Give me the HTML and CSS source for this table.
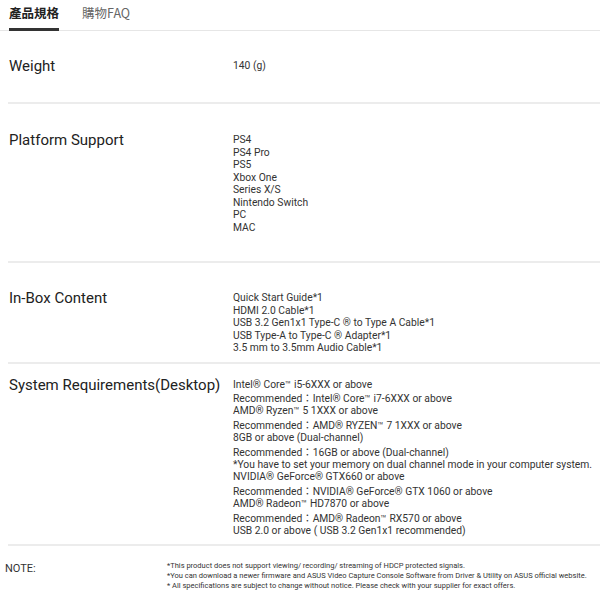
FILE: index.html
```html
<!DOCTYPE html>
<html lang="zh-Hant">
<head>
<meta charset="utf-8">
<title>產品規格</title>
<link rel="stylesheet" href="styles.css">
</head>
<body>
<div class="page">
  <nav class="tabs">
    <span class="tab tab-active">產品規格</span>
    <span class="tab">購物FAQ</span>
  </nav>

  <section class="row row-weight">
    <div class="label">Weight</div>
    <div class="values"><div>140 (g)</div></div>
  </section>

  <section class="row row-platform">
    <div class="label">Platform Support</div>
    <div class="values">
      <div>PS4</div>
      <div>PS4 Pro</div>
      <div>PS5</div>
      <div>Xbox One</div>
      <div>Series X/S</div>
      <div>Nintendo Switch</div>
      <div>PC</div>
      <div>MAC</div>
    </div>
  </section>

  <section class="row row-inbox">
    <div class="label">In-Box Content</div>
    <div class="values">
      <div>Quick Start Guide*1</div>
      <div>HDMI 2.0 Cable*1</div>
      <div>USB 3.2 Gen1x1 Type-C ® to Type A Cable*1</div>
      <div>USB Type-A to Type-C ® Adapter*1</div>
      <div>3.5 mm to 3.5mm Audio Cable*1</div>
    </div>
  </section>

  <section class="row row-system">
    <div class="label">System Requirements(Desktop)</div>
    <div class="values values-tight">
      <div>Intel® Core™ i5-6XXX or above</div>
      <div class="rec">Recommended：Intel® Core™ i7-6XXX or above</div>
      <div>AMD® Ryzen™ 5 1XXX or above</div>
      <div class="rec">Recommended：AMD® RYZEN™ 7 1XXX or above</div>
      <div>8GB or above (Dual-channel)</div>
      <div class="rec">Recommended：16GB or above (Dual-channel)</div>
      <div>*You have to set your memory on dual channel mode in your computer system.</div>
      <div>NVIDIA® GeForce® GTX660 or above</div>
      <div class="rec">Recommended：NVIDIA® GeForce® GTX 1060 or above</div>
      <div>AMD® Radeon™ HD7870 or above</div>
      <div class="rec">Recommended：AMD® Radeon™ RX570 or above</div>
      <div>USB 2.0 or above ( USB 3.2 Gen1x1 recommended)</div>
    </div>
  </section>

  <section class="note">
    <div class="note-label">NOTE:</div>
    <div class="note-text">
      <div>*This product does not support viewing/ recording/ streaming of HDCP protected signals.</div>
      <div>*You can download a newer firmware and ASUS Video Capture Console Software from Driver &amp; Utility on ASUS official website.</div>
      <div>* All specifications are subject to change without notice. Please check with your supplier for exact offers.</div>
    </div>
  </section>
</div>
</body>
</html>
```

FILE: styles.css
```css
html, body {
  margin: 0;
  padding: 0;
  background: #ffffff;
}

body {
  font-family: Roboto, "Noto Sans", "Noto Sans CJK TC", sans-serif;
  color: #222;
}

.page {
  width: 600px;
}

.tabs {
  display: flex;
  gap: 23px;
  height: 31px;
  padding-left: 9px;
  border-bottom: 1px solid #e6e6e6;
  box-sizing: border-box;
}

.tab {
  font-family: "Noto Sans CJK TC", "Noto Sans", sans-serif;
  font-size: 12.5px;
  line-height: 18px;
  padding-top: 4px;
  color: #666;
  white-space: nowrap;
}

.tab-active {
  color: #222;
  font-weight: 700;
  border-bottom: 3px solid #333;
  margin-bottom: -1px;
}

.row {
  display: flex;
  margin-left: 8px;
  border-bottom: 2px solid #ececec;
}

.label {
  width: 224px;
  flex: none;
  padding-left: 1px;
  font-size: 15px;
  line-height: 20px;
  color: #222;
  white-space: nowrap;
}

.values {
  padding-top: 4px;
  font-size: 10.3px;
  line-height: 12.5px;
  color: #333;
  white-space: nowrap;
}

.values-tight {
  line-height: 12.2px;
}

.rec {
  margin-top: 2.5px;
}

.row-weight {
  padding-top: 25px;
  padding-bottom: 26px;
}

.row-platform {
  padding-top: 26px;
  padding-bottom: 27px;
}

.row-inbox {
  padding-top: 25px;
  padding-bottom: 7px;
}

.row-system {
  padding-top: 11px;
  padding-bottom: 7px;
}

.note {
  display: flex;
  padding-top: 15px;
}

.note-label {
  width: 162px;
  flex: none;
  padding-left: 5px;
  padding-top: 1px;
  font-size: 11px;
  line-height: 14px;
  color: #333;
}

.note-text {
  font-size: 7.5px;
  line-height: 10px;
  color: #333;
  white-space: nowrap;
}
```
